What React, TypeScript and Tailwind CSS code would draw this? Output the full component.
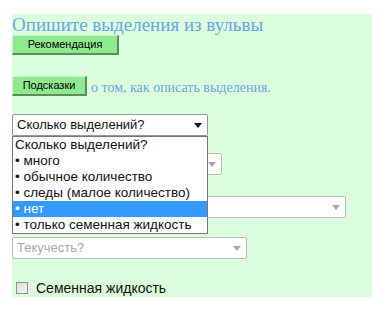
import { ReactNode } from 'react';

const options = [
  'Сколько выделений?',
  '• много',
  '• обычное количество',
  '• следы (малое количество)',
  '• нет',
  '• только семенная жидкость',
];

function Arrow({ disabled }: { disabled?: boolean }) {
  return (
    <svg width="8" height="5" viewBox="0 0 8 5" className="shrink-0">
      <path d="M0 0h8L4 5z" fill={disabled ? '#a8a8a8' : '#111'} />
    </svg>
  );
}

function FakeSelect({
  width,
  disabled,
  children,
}: {
  width: string;
  disabled?: boolean;
  children?: ReactNode;
}) {
  return (
    <div
      className={`${width} h-[22px] flex items-center justify-between pl-[4px] pr-[5px] bg-white rounded-[2px] border ${
        disabled ? 'border-[#b9b9b9] text-[#aaaaaa]' : 'border-[#8c9aa8] text-[#111]'
      }`}
    >
      <span className="truncate">{children}</span>
      <Arrow disabled={disabled} />
    </div>
  );
}

function GreenButton({ width, children }: { width: string; children: ReactNode }) {
  return (
    <button
      className={`${width} h-[20px] shrink-0 flex items-center justify-center bg-[#8fe98f] text-[11px] text-black border-t border-l border-t-[#c8f5c8] border-l-[#c8f5c8] border-r-2 border-b-2 border-r-[#5c8d5c] border-b-[#5c8d5c] leading-none`}
    >
      {children}
    </button>
  );
}

export default function App() {
  return (
    <div className="w-[378px] h-[315px] bg-white pt-[14px] pl-[12px] font-['Liberation_Sans',Arial,sans-serif]">
      <div className="w-[360px] h-[283px] bg-[#dcfedc] flex flex-col items-start">
        <h1 className="font-['Liberation_Serif','Times_New_Roman',serif] text-[19px] leading-[21px] text-[#6aa6e6] h-[21px] whitespace-nowrap">
          Опишите выделения из вульвы
        </h1>
        <GreenButton width="w-[107px]">Рекомендация</GreenButton>
        <div className="mt-[21px] h-[20px] flex items-center gap-[4px]">
          <GreenButton width="w-[75px]">Подсказки</GreenButton>
          <span className="font-['Liberation_Serif','Times_New_Roman',serif] text-[14px] leading-[14px] text-[#6aa6e6] mt-[4px]">
            о том, как описать выделения.
          </span>
        </div>

        <div className="relative mt-[18px] text-[13px]">
          <FakeSelect width="w-[196px]">Сколько выделений?</FakeSelect>

          <div className="mt-[17px]">
            <FakeSelect width="w-[210px]" disabled />
          </div>
          <div className="mt-[21px]">
            <FakeSelect width="w-[334px]" disabled />
          </div>
          <div className="mt-[19px]">
            <FakeSelect width="w-[235px]" disabled>
              Текучесть?
            </FakeSelect>
          </div>

          {/* open option list */}
          <ul className="absolute left-0 top-[22px] w-[196px] bg-white border border-[#767676] text-[13.5px] text-[#111] leading-[16px]">
            {options.map((o) => (
              <li
                key={o}
                className={`h-[16px] pl-[2px] whitespace-nowrap ${o === '• нет' ? 'bg-[#3399ff] text-white' : ''}`}
              >
                {o}
              </li>
            ))}
          </ul>
        </div>

        <label className="mt-[21px] ml-[4px] flex items-center gap-[8px] text-[14px] leading-[16px] text-[#111]">
          <span className="w-[12px] h-[12px] border border-[#8f8f9d] bg-gradient-to-br from-[#dcdcdc] to-[#f7f7f7]" />
          Семенная жидкость
        </label>
      </div>
    </div>
  );
}
